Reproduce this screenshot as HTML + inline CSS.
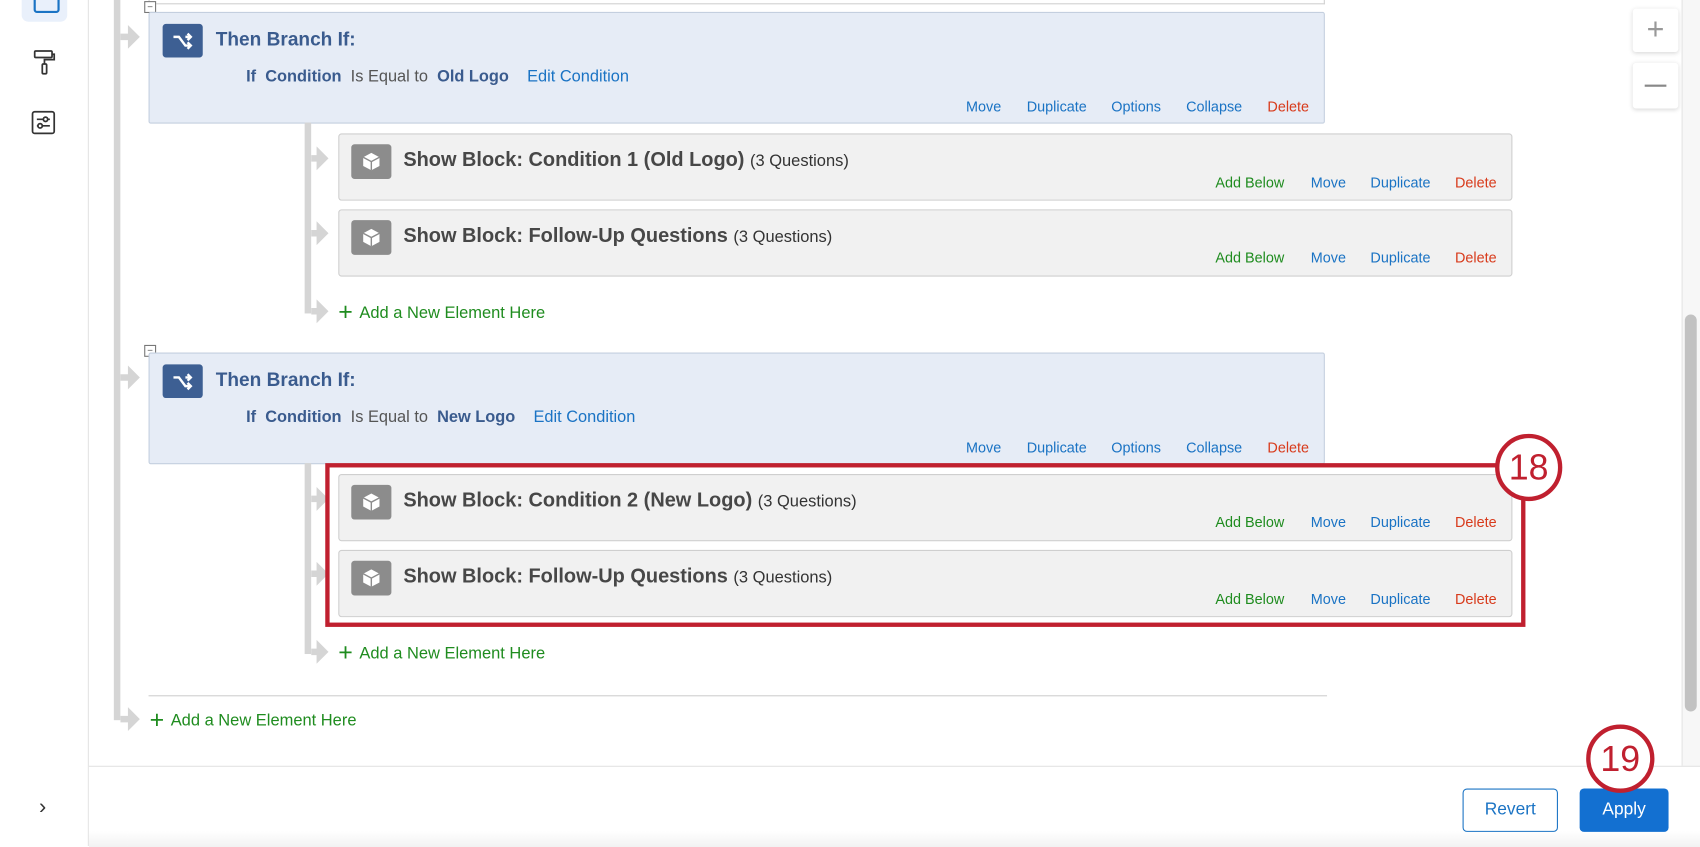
<!DOCTYPE html>
<html><head><meta charset="utf-8"><style>
html,body{margin:0;padding:0;width:1700px;height:846px;overflow:hidden;background:#fff}
#s{position:absolute;left:0;top:0;width:1568px;height:780px;transform:scale(1.08418,1.08462);transform-origin:0 0;font-family:"Liberation Sans",sans-serif;}
.a{position:absolute}
.vl{position:absolute;background:#d5d5d5;width:6px}
.arr{position:absolute;width:22px;height:24px}
.branch{position:absolute;left:137px;width:1083px;height:101px;background:#e6ecf6;border:1px solid #c4cfdf;border-radius:2px}
.blk{position:absolute;left:312px;width:1081px;height:60px;background:#f1f1f1;border:1px solid #cfcfcf;border-radius:3px}
.bicon{position:absolute;left:11px;top:9px;width:37px;height:32px;background:#8c8c8c;border-radius:3px}
.btitle{position:absolute;left:59px;top:12px;font-size:18.4px;font-weight:bold;color:#474747;white-space:nowrap}
.btitle span{font-weight:normal;font-size:15.2px;color:#333}
.act{position:absolute;font-size:13.3px;white-space:nowrap}
.g{color:#1f8c1f}.b{color:#1a73c4}.r{color:#d83b1c}
.add{position:absolute;font-size:15.2px;color:#1f8c1f;white-space:nowrap}
.add b{font-size:23px;font-weight:normal;position:relative;top:2px;margin-right:6px}
.sq{position:absolute;width:9px;height:9px;border:1px solid #777;background:#fff;font-size:9px;line-height:8px;text-align:center;color:#555}
.circ{position:absolute;border:4px solid #c0202f;background:#fff;border-radius:50%;color:#c0202f;text-align:center;box-sizing:border-box}
.cond{position:absolute;left:89px;top:50px;font-size:15.1px;white-space:nowrap;color:#3a5b8e}
.bt{position:absolute;left:61px;top:14px;font-size:17.6px;font-weight:bold;color:#3a5b8e}
</style></head><body><div id="s">
<!-- sidebar -->
<div class="a" style="left:0;top:0;width:82px;height:780px;border-right:1px solid #e3e3e3;box-sizing:border-box"></div>
<div class="a" style="left:20px;top:-10px;width:42px;height:30px;background:#e9f0fb;border-radius:6px"></div>
<div class="a" style="left:31px;top:-4px;width:20px;height:12px;border:2px solid #1a73c4;border-radius:3px"></div>
<svg class="a" style="left:28px;top:44px" width="26" height="26" viewBox="0 0 26 26" fill="none" stroke="#333" stroke-width="1.6"><rect x="4" y="3" width="16" height="6" rx="1"/><path d="M20 6h2v5H13v4"/><rect x="11" y="15" width="4" height="9" rx="1"/></svg>
<svg class="a" style="left:28px;top:101px" width="24" height="24" viewBox="0 0 24 24" fill="none" stroke="#333" stroke-width="1.6"><rect x="2" y="2" width="20" height="20" rx="2"/><path d="M6 9h12M6 15h12"/><circle cx="14" cy="9" r="2" fill="#fff"/><circle cx="9" cy="15" r="2" fill="#fff"/></svg>
<div class="a" style="left:36px;top:733px;font-size:20px;color:#333">›</div>

<div class="a" style="left:137px;top:-2px;width:1083px;height:5px;border:1px solid #d0d0d0;border-top:none"></div>

<div class="vl" style="left:105px;top:0;height:664px"></div>
<svg class="arr" style="left:111px;top:22px"><path d="M0 9h7V1l11 11-11 11v-8H0z" fill="#d5d5d5"/></svg>
<svg class="arr" style="left:111px;top:336px"><path d="M0 9h7V1l11 11-11 11v-8H0z" fill="#d5d5d5"/></svg>
<svg class="arr" style="left:111px;top:651px"><path d="M0 9h7V1l11 11-11 11v-8H0z" fill="#d5d5d5"/></svg>

<!-- Branch 1 -->
<div class="sq" style="left:133px;top:1px">−</div>
<div class="branch" style="top:11px">
 <div class="a" style="left:12px;top:10px;width:37px;height:31px;background:#3d5f93;border-radius:3px"></div>
 <svg class="a" style="left:20px;top:16px" width="22" height="20" viewBox="0 0 22 20" fill="none" stroke="#fff" stroke-width="2.2"><path d="M2 6h5l6 8h5M13 6h5M15 3l3 3-3 3M15 11l3 3-3 3"/></svg>
 <div class="bt">Then Branch If:</div>
 <div class="cond"><b>If</b>&nbsp; <b>Condition</b>&nbsp; <span style="color:#555">Is Equal to</span>&nbsp; <b>Old Logo</b>&nbsp;&nbsp;&nbsp; <span class="b">Edit Condition</span></div>
 <div class="act b" style="left:753px;top:79px">Move</div><div class="act b" style="left:809px;top:79px">Duplicate</div><div class="act b" style="left:887px;top:79px">Options</div><div class="act b" style="left:956px;top:79px">Collapse</div><div class="act r" style="left:1031px;top:79px">Delete</div>
</div>
<div class="vl" style="left:281px;top:113px;height:176px"></div>
<svg class="arr" style="left:287px;top:134px"><path d="M0 9h5V1l11 11-11 11v-8H0z" fill="#d5d5d5"/></svg>
<svg class="arr" style="left:287px;top:203px"><path d="M0 9h5V1l11 11-11 11v-8H0z" fill="#d5d5d5"/></svg>
<svg class="arr" style="left:287px;top:275px"><path d="M0 9h5V1l11 11-11 11v-8H0z" fill="#d5d5d5"/></svg>

<div class="blk" style="top:123px"><div class="bicon"></div><svg class="a" style="left:21px;top:16px" width="17" height="18" viewBox="0 0 17 18"><path d="M8.5 1 16 5v8l-7.5 4L1 13V5z" fill="#fff"/><path d="M1 5l7.5 4L16 5M8.5 9v8" stroke="#8c8c8c" stroke-width="1.3" fill="none"/></svg>
 <div class="btitle">Show Block: Condition 1 (Old Logo) <span>(3 Questions)</span></div>
 <div class="act g" style="left:808px;top:37px">Add Below</div><div class="act b" style="left:896px;top:37px">Move</div><div class="act b" style="left:951px;top:37px">Duplicate</div><div class="act r" style="left:1029px;top:37px">Delete</div></div>
<div class="blk" style="top:193px"><div class="bicon"></div><svg class="a" style="left:21px;top:16px" width="17" height="18" viewBox="0 0 17 18"><path d="M8.5 1 16 5v8l-7.5 4L1 13V5z" fill="#fff"/><path d="M1 5l7.5 4L16 5M8.5 9v8" stroke="#8c8c8c" stroke-width="1.3" fill="none"/></svg>
 <div class="btitle">Show Block: Follow-Up Questions <span>(3 Questions)</span></div>
 <div class="act g" style="left:808px;top:36px">Add Below</div><div class="act b" style="left:896px;top:36px">Move</div><div class="act b" style="left:951px;top:36px">Duplicate</div><div class="act r" style="left:1029px;top:36px">Delete</div></div>
<div class="add" style="left:312px;top:272px"><b>+</b>Add a New Element Here</div>

<!-- Branch 2 -->
<div class="sq" style="left:133px;top:318px">−</div>
<div class="branch" style="top:325px">
 <div class="a" style="left:12px;top:10px;width:37px;height:31px;background:#3d5f93;border-radius:3px"></div>
 <svg class="a" style="left:20px;top:16px" width="22" height="20" viewBox="0 0 22 20" fill="none" stroke="#fff" stroke-width="2.2"><path d="M2 6h5l6 8h5M13 6h5M15 3l3 3-3 3M15 11l3 3-3 3"/></svg>
 <div class="bt">Then Branch If:</div>
 <div class="cond"><b>If</b>&nbsp; <b>Condition</b>&nbsp; <span style="color:#555">Is Equal to</span>&nbsp; <b>New Logo</b>&nbsp;&nbsp;&nbsp; <span class="b">Edit Condition</span></div>
 <div class="act b" style="left:753px;top:79px">Move</div><div class="act b" style="left:809px;top:79px">Duplicate</div><div class="act b" style="left:887px;top:79px">Options</div><div class="act b" style="left:956px;top:79px">Collapse</div><div class="act r" style="left:1031px;top:79px">Delete</div>
</div>
<div class="vl" style="left:281px;top:427px;height:176px"></div>
<svg class="arr" style="left:287px;top:448px"><path d="M0 9h5V1l11 11-11 11v-8H0z" fill="#d5d5d5"/></svg>
<svg class="arr" style="left:287px;top:517px"><path d="M0 9h5V1l11 11-11 11v-8H0z" fill="#d5d5d5"/></svg>
<svg class="arr" style="left:287px;top:589px"><path d="M0 9h5V1l11 11-11 11v-8H0z" fill="#d5d5d5"/></svg>

<div class="blk" style="top:437px"><div class="bicon"></div><svg class="a" style="left:21px;top:16px" width="17" height="18" viewBox="0 0 17 18"><path d="M8.5 1 16 5v8l-7.5 4L1 13V5z" fill="#fff"/><path d="M1 5l7.5 4L16 5M8.5 9v8" stroke="#8c8c8c" stroke-width="1.3" fill="none"/></svg>
 <div class="btitle">Show Block: Condition 2 (New Logo) <span>(3 Questions)</span></div>
 <div class="act g" style="left:808px;top:36px">Add Below</div><div class="act b" style="left:896px;top:36px">Move</div><div class="act b" style="left:951px;top:36px">Duplicate</div><div class="act r" style="left:1029px;top:36px">Delete</div></div>
<div class="blk" style="top:507px"><div class="bicon"></div><svg class="a" style="left:21px;top:16px" width="17" height="18" viewBox="0 0 17 18"><path d="M8.5 1 16 5v8l-7.5 4L1 13V5z" fill="#fff"/><path d="M1 5l7.5 4L16 5M8.5 9v8" stroke="#8c8c8c" stroke-width="1.3" fill="none"/></svg>
 <div class="btitle">Show Block: Follow-Up Questions <span>(3 Questions)</span></div>
 <div class="act g" style="left:808px;top:37px">Add Below</div><div class="act b" style="left:896px;top:37px">Move</div><div class="act b" style="left:951px;top:37px">Duplicate</div><div class="act r" style="left:1029px;top:37px">Delete</div></div>
<div class="add" style="left:312px;top:586px"><b>+</b>Add a New Element Here</div>

<div class="a" style="left:137px;top:641px;width:1087px;height:1px;background:#cfcfcf"></div>
<div class="add" style="left:138px;top:648px"><b>+</b>Add a New Element Here</div>

<div class="a" style="left:300px;top:427px;width:1107px;height:151px;border:4px solid #c0202f;box-sizing:border-box"></div>
<div class="circ" style="left:1379px;top:400px;width:62px;height:62px;font-size:33px;line-height:54px">18</div>

<div class="a" style="left:1506px;top:8px;width:42px;height:40px;background:#fff;box-shadow:0 1px 4px rgba(0,0,0,.15);border-radius:3px;text-align:center;font-size:28px;line-height:38px;color:#999;font-weight:300">+</div>
<div class="a" style="left:1506px;top:58px;width:42px;height:42px;background:#fff;box-shadow:0 1px 4px rgba(0,0,0,.15);border-radius:3px"></div>
<div class="a" style="left:1517px;top:78px;width:20px;height:2px;background:#888"></div>

<div class="a" style="left:1551px;top:0;width:17px;height:706px;background:#f7f7f7;border-left:1px solid #e5e5e5"></div>
<div class="a" style="left:1554px;top:290px;width:11px;height:366px;background:#c2c2c2;border-radius:6px"></div>

<div class="a" style="left:82px;top:706px;width:1486px;height:74px;background:linear-gradient(#fff 80%,#f2f2f2);border-top:1px solid #e2e2e2"></div>
<div class="a" style="left:1349px;top:727px;width:88px;height:40px;border:1px solid #1a73c4;border-radius:4px;box-sizing:border-box;background:#fff;color:#1a73c4;font-size:16px;text-align:center;line-height:38px">Revert</div>
<div class="a" style="left:1457px;top:727px;width:82px;height:40px;background:#1370d1;border-radius:4px;color:#fff;font-size:16px;text-align:center;line-height:40px">Apply</div>
<div class="circ" style="left:1463px;top:668px;width:63px;height:63px;font-size:33px;line-height:55px">19</div>
</div></body></html>
